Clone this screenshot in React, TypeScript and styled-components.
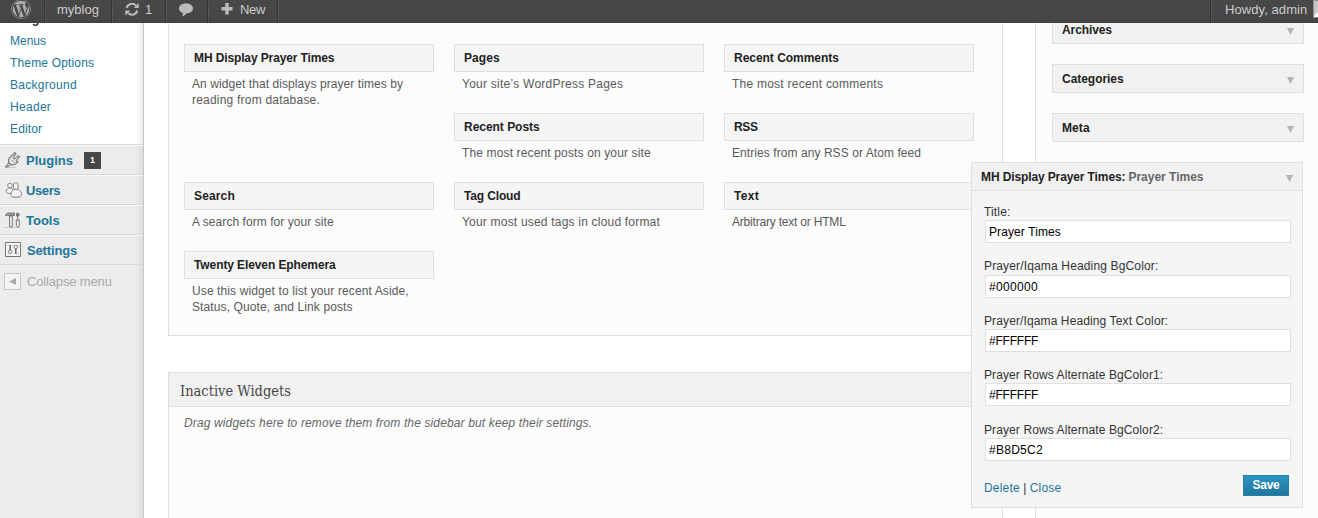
import React from "react";
import styled, { createGlobalStyle } from "styled-components";
import { FaWordpress } from "react-icons/fa";

const Global = createGlobalStyle`
  * { box-sizing: border-box; }
  body { margin: 0; background: #fff; overflow: hidden; font: 12px/16px "Liberation Sans", Arial, sans-serif; color: #333; }
  a { color: #21759b; text-decoration: none; }
  p, h2, h3, h4 { margin: 0; }
`;

/* Slightly tracked run of text */
const Run = styled.span<{ $track?: number }>`
  letter-spacing: ${(p) => p.$track ?? 0}px;
  white-space: nowrap;
`;

const Page = styled.div`
  width: 1318px;
  height: 518px;
  display: flex;
  flex-direction: column;
  overflow: hidden;
  position: relative;
`;

const AdminBar = styled.header`
  flex: none;
  height: 23px;
  display: flex;
  background: linear-gradient(#484848, #464646 80%, #424242);
  color: #ccc;
  font-size: 13px;
  line-height: 19px;
`;
const BarItem = styled.div<{ $width: number; $pad: number; $gap?: number }>`
  width: ${(p) => p.$width}px;
  padding-left: ${(p) => p.$pad}px;
  display: flex;
  gap: ${(p) => p.$gap ?? 0}px;
  border-right: 1px solid #333;
  box-shadow: 1px 0 0 #555;
  svg { flex: none; }
`;
const Logo = styled(FaWordpress)`
  width: 20px;
  height: 20px;
  margin-top: -1px;
  color: #aaa;
`;
const BarAccount = styled.div`
  margin-left: auto;
  width: 107px;
  padding-left: 13px;
  display: flex;
  border-left: 1px solid #555;
  box-shadow: -1px 0 0 #333;
  overflow: hidden;
`;
const AccountName = styled.span`
  width: 88px;
  flex: none;
`;
const Avatar = styled.span`
  flex: none;
  width: 18px;
  height: 18px;
  border: 1px solid #8f8f8f;
  background: #c6c6c6;
  overflow: hidden;
  svg { display: block; }
`;

const Body = styled.div`
  flex: 1;
  min-height: 0;
  display: flex;
`;

const Sidebar = styled.nav`
  flex: none;
  width: 144px;
  overflow: hidden;
  border-right: 1px solid #c6c6c6;
  background: linear-gradient(to left, rgba(0, 0, 0, 0.07), rgba(0, 0, 0, 0) 7px), #ececec;
`;
const Submenu = styled.div`
  height: 121px;
  background: linear-gradient(to left, rgba(0, 0, 0, 0.07), rgba(0, 0, 0, 0) 7px), #fff;
  overflow: hidden;
`;
const SubmenuList = styled.div`
  margin-top: -15px;
  padding-left: 10px;
  display: flex;
  flex-direction: column;
  line-height: 22px;
`;
const Current = styled.b`
  color: #333;
`;
const MenuRow = styled.a`
  height: 30px;
  padding: 2px 0 0 4px;
  display: flex;
  align-items: center;
  border-top: 1px solid #d9d9d9;
  box-shadow: inset 0 1px 0 #f9f9f9;
  font-weight: bold;
  font-size: 13px;
`;
const MenuIcon = styled.span<{ $wide?: boolean }>`
  width: ${(p) => (p.$wide ? 23 : 22)}px;
  height: 18px;
  margin-bottom: 2px;
  svg { display: block; }
`;
const Count = styled.span`
  width: 17px;
  height: 17px;
  margin-left: 11px;
  background: #464646;
  color: #fff;
  font-size: 9px;
  line-height: 17px;
  text-align: center;
`;
const Collapse = styled.div`
  height: 40px;
  padding: 8px 0 0 4px;
  display: flex;
  gap: 6px;
  border-top: 1px solid #d9d9d9;
  color: #aaa;
  font-size: 13px;
  line-height: 17px;
`;
const CollapseButton = styled.span`
  width: 17px;
  height: 17px;
  border: 1px solid #c8c8c8;
  background: #f4f4f4;
  svg { display: block; }
`;

const Main = styled.main`
  flex: none;
  width: 835px;
  margin-left: 24px;
  display: flex;
  flex-direction: column;
`;
const Available = styled.section`
  flex: none;
  height: 313px;
  padding: 21px 15px 0;
  display: grid;
  grid-template-columns: repeat(3, 250px);
  grid-auto-rows: 69px;
  column-gap: 20px;
  align-content: start;
  border: 1px solid #dfdfdf;
  border-top: 0;
  background: #fcfcfc;
`;
const Cell = styled.div<{ $start?: boolean }>`
  ${(p) => p.$start && "grid-column-start: 2;"}
`;
const WidgetTitle = styled.h4`
  height: 28px;
  padding-left: 9px;
  border: 1px solid #dfdfdf;
  background: #f5f5f5;
  color: #222;
  font-size: 12px;
  line-height: 26px;
`;
const Description = styled.p`
  padding: 4px 0 0 8px;
  color: #5a5a5a;
`;
const Inactive = styled.section`
  flex: 1;
  margin-top: 36px;
  border: 1px solid #dfdfdf;
  border-bottom: 0;
  background: #fcfcfc;
`;
const InactiveTitle = styled.h3`
  height: 34px;
  padding-left: 11px;
  border-bottom: 1px solid #dfdfdf;
  background: #f1f1f1;
  color: #464646;
  font: 14.5px/36px "DejaVu Serif Condensed", Georgia, serif;
`;
const Hint = styled.p`
  padding: 8px 0 0 15px;
  color: #666;
  font-style: italic;
`;

const Column = styled.aside`
  flex: 1;
  margin-left: 32px;
  padding-left: 16px;
  border-left: 1px solid #dfdfdf;
  background: #fcfcfc;
  overflow: hidden;
`;
const Stack = styled.div`
  margin-top: -8px;
  display: flex;
  flex-direction: column;
  gap: 20px;
`;
const SidebarWidget = styled.div`
  width: 252px;
  height: 29px;
  padding: 0 9px;
  display: flex;
  justify-content: space-between;
  align-items: center;
  border: 1px solid #dfdfdf;
  background: #f1f1f1;
  color: #222;
  font-weight: bold;
  svg { margin-top: 3px; }
`;

const Editor = styled.section`
  position: absolute;
  left: 971px;
  top: 162px;
  width: 332px;
  height: 346px;
  border: 1px solid #dfdfdf;
  background: #f5f5f5;
`;
const EditorHeader = styled.header`
  height: 28px;
  padding: 0 9px;
  display: flex;
  align-items: center;
  border-bottom: 1px solid #dfdfdf;
  background: #f1f1f1;
  color: #222;
  font-weight: bold;
  svg { margin: 3px 0 0 auto; }
`;
const EditorSubtitle = styled.span`
  margin-left: 3px;
  color: #666;
`;
const Form = styled.form`
  padding: 13px 11px 0 12px;
`;
const Field = styled.label`
  display: block;
  height: 54.4px;
  line-height: 16.2px;
`;
const Input = styled.input<{ $track: number }>`
  display: block;
  width: 306px;
  height: 23px;
  margin-left: 1px;
  padding: 1px 3px 0;
  border: 1px solid #dfdfdf;
  border-radius: 0;
  background: #fff;
  color: #000;
  outline: 0;
  font: 12px "Liberation Sans", Arial, sans-serif;
  letter-spacing: ${(p) => p.$track}px;
`;
const Actions = styled.div`
  display: flex;
  justify-content: space-between;
  padding-right: 2px;
`;
const Links = styled.div`
  padding-top: 4px;
`;
const Save = styled.button`
  width: 46px;
  height: 21px;
  margin-top: -1px;
  padding: 0;
  border: 1px solid #2480aa;
  border-radius: 0;
  background: linear-gradient(#2a95c5, #21759b);
  color: #fff;
  font: bold 12px/18px "Liberation Sans", Arial, sans-serif;
`;

const Caret = () => (
  <svg width="7" height="7" viewBox="0 0 7 7"><path d="M0 0h7L3.5 7z" fill="#b4b4b4" /></svg>
);

const SyncIcon = () => (
  <svg width="16" height="18" viewBox="0 0 16 18" fill="none" stroke="#bbb" strokeWidth="2">
    <path d="M2.700 8a5.300 5 0 0 1 9.300-2.400M13.300 10.500A5.300 5 0 0 1 4 12.900" />
    <path d="M14.700 3v5H9.700z M1.300 15.500v-5h5z" fill="#bbb" stroke="none" />
  </svg>
);
const BubbleIcon = () => (
  <svg width="16" height="20" viewBox="0 0 16 20">
    <path d="M8 3.500c4 0 7 2 7 4.900s-3 4.900-6.600 4.900c-.8 1.500-2.400 2.800-4.400 3.300.8-1.200 1-2.500.8-3.800C2.400 12 1 10.400 1 8.400c0-2.900 3-4.900 7-4.900z" fill="#bbb" />
  </svg>
);
const PlusIcon = () => (
  <svg width="12" height="16" viewBox="0 0 12 16"><path d="M4.300 3h3.400v4h3.800v3.400H7.700v4H4.300v-4H.5V7h3.800z" fill="#bbb" /></svg>
);

const PluginIcon = () => (
  <svg width="18" height="18" viewBox="0 0 18 18" fill="none" stroke="#777" strokeWidth="1.100">
    <path d="M1 16.500h11" stroke="#ccc" />
    <path d="M5 7.500 7.500 5l6.500 6-3 2.300c-2 .9-4 .6-5.300-.7S4.200 9.300 5 7.500z" fill="#eee" />
    <path d="m7 5.500 4-4 1 1.200-3 4M12 9.800l3.500-4.300-1.200-.8-4 3.600" fill="#fff" />
    <path d="M5.500 12c-2.500 0-1.500 2.500-4.500 4.200M7.500 13.300c-2 .2-2 2.200-5 3" />
    <path d="m7 8.500 4 3.500" stroke="#aaa" />
  </svg>
);
const UsersIcon = () => (
  <svg width="19" height="18" viewBox="0 0 19 18" fill="#f4f4f4" stroke="#888">
    <path d="M5 16.500h13" stroke="#ccc" />
    <circle cx="6" cy="4.500" r="2.300" />
    <path d="M6 7c-2.300 0-3.700 1.500-3.700 3.300S4 12.500 7 12.500L9 9C8.500 7.700 7.500 7 6 7z" />
    <rect x="9.500" y="1.600" width="4.600" height="7" rx="2.300" />
    <path d="M12 8.300c-3.200 0-5 2-5 4.300 0 2.500 2 3.600 5.200 3.600 3.300 0 5.300-1.100 5.300-3.600 0-2.300-2.300-4.300-5.500-4.300z" />
  </svg>
);
const ToolsIcon = () => (
  <svg width="18" height="18" viewBox="0 0 18 18" fill="none" stroke="#777">
    <path d="M1 16.500h15" stroke="#ccc" />
    <path d="M1.500 5c.3-2 1.500-3 3.500-3h5.500v2.500H5C3.500 4 2.500 4 1.500 5z" fill="#999" />
    <path d="M5.500 5h2.800v10.800H5.500z" fill="#eee" />
    <path d="M13.700 1.500v8M12.300 9h3v5.500c0 1.800-3 1.800-3 0z" fill="#eee" />
    <path d="M12.500 2.500h2.500v2.500h-2.500z" fill="#888" />
  </svg>
);
const SettingsIcon = () => (
  <svg width="18" height="18" viewBox="0 0 18 18" fill="none" stroke="#777">
    <path d="M1.500 1.500h15v14h-15z" fill="#f6f6f6" />
    <path d="M6.200 4v5M11.800 8v5" strokeWidth="1.600" stroke="#666" />
    <circle cx="6.200" cy="10.800" r="1.700" fill="#fff" />
    <circle cx="11.800" cy="6" r="1.700" fill="#fff" />
    <path d="M3.500 4.500h1M8 4.500h1M14 4.500h1M3.500 12.500h1M14 12.500h1" stroke="#aaa" />
  </svg>
);

type Line = [text: string, track: number];

const submenu: Line[] = [["Menus", 0], ["Theme Options", 0.164], ["Background", 0.29], ["Header", 0.3], ["Editor", 0.13]];

const menu: { label: Line; icon: React.ReactNode; count?: number; wide?: boolean }[] = [
  { label: ["Plugins", 0], icon: <PluginIcon />, count: 1 },
  { label: ["Users", -0.4], icon: <UsersIcon /> },
  { label: ["Tools", 0], icon: <ToolsIcon /> },
  { label: ["Settings", -0.15], icon: <SettingsIcon />, wide: true },
];

const available: { title: Line; text: Line[]; start?: boolean }[] = [
  { title: ["MH Display Prayer Times", -0.12], text: [["An widget that displays prayer times by", 0.076], ["reading from database.", 0.21]] },
  { title: ["Pages", 0.05], text: [["Your site’s WordPress Pages", 0.25]] },
  { title: ["Recent Comments", -0.03], text: [["The most recent comments", 0.24]] },
  { title: ["Recent Posts", -0.03], text: [["The most recent posts on your site", 0.14]], start: true },
  { title: ["RSS", -0.3], text: [["Entries from any RSS or Atom feed", 0.07]] },
  { title: ["Search", 0.15], text: [["A search form for your site", 0.06]] },
  { title: ["Tag Cloud", -0.15], text: [["Your most used tags in cloud format", 0.2]] },
  { title: ["Text", 0.3], text: [["Arbitrary text or HTML", -0.2]] },
  { title: ["Twenty Eleven Ephemera", -0.1], text: [["Use this widget to list your recent Aside,", 0.11], ["Status, Quote, and Link posts", 0.11]] },
];

const placed: Line[] = [["Archives", -0.1], ["Categories", -0.04], ["Meta", 0.1]];

const fields: { label: Line; value: Line }[] = [
  { label: ["Title:", 0.15], value: ["Prayer Times", 0.1] },
  { label: ["Prayer/Iqama Heading BgColor:", 0.15], value: ["#000000", 0.32] },
  { label: ["Prayer/Iqama Heading Text Color:", 0.116], value: ["#FFFFFF", -0.22] },
  { label: ["Prayer Rows Alternate BgColor1:", 0.1], value: ["#FFFFFF", -0.22] },
  { label: ["Prayer Rows Alternate BgColor2:", 0.1], value: ["#B8D5C2", 0.27] },
];

export default function App() {
  return (
    <Page>
      <Global />
      <AdminBar>
        <BarItem $width={45} $pad={11}><Logo /></BarItem>
        <BarItem $width={67} $pad={12}><Run>myblog</Run></BarItem>
        <BarItem $width={54} $pad={12} $gap={5}><SyncIcon /><Run>1</Run></BarItem>
        <BarItem $width={42} $pad={12}><BubbleIcon /></BarItem>
        <BarItem $width={70} $pad={13} $gap={7}><PlusIcon /><Run $track={-0.3}>New</Run></BarItem>
        <BarAccount>
          <AccountName><Run $track={0.08}>Howdy, admin</Run></AccountName>
          <Avatar>
            <svg width="16" height="16" viewBox="0 0 16 16"><path d="M0 16c1-3 3-5 6-5h4c3 0 5 2 6 5z" fill="#fff" /></svg>
          </Avatar>
        </BarAccount>
      </AdminBar>

      <Body>
        <Sidebar>
          <Submenu>
            <SubmenuList>
              <Current>Widgets</Current>
              {submenu.map(([t, k]) => (
                <a key={t}><Run $track={k}>{t}</Run></a>
              ))}
            </SubmenuList>
          </Submenu>
          {menu.map((m) => (
            <MenuRow key={m.label[0]}>
              <MenuIcon $wide={m.wide}>{m.icon}</MenuIcon>
              <Run $track={m.label[1]}>{m.label[0]}</Run>
              {m.count && <Count>{m.count}</Count>}
            </MenuRow>
          ))}
          <Collapse>
            <CollapseButton>
              <svg width="15" height="15" viewBox="0 0 15 15"><path d="M4 7.500 11 4v7z" fill="#aaa" /></svg>
            </CollapseButton>
            <Run $track={-0.15}>Collapse menu</Run>
          </Collapse>
        </Sidebar>

        <Main>
          <Available>
            {available.map((w) => (
              <Cell key={w.title[0]} $start={w.start}>
                <WidgetTitle><Run $track={w.title[1]}>{w.title[0]}</Run></WidgetTitle>
                <Description>
                  {w.text.map(([t, k], i) => (
                    <React.Fragment key={t}>
                      {i > 0 && <br />}
                      <Run $track={k}>{t}</Run>
                    </React.Fragment>
                  ))}
                </Description>
              </Cell>
            ))}
          </Available>
          <Inactive>
            <InactiveTitle>Inactive Widgets</InactiveTitle>
            <Hint><Run $track={0.135}>Drag widgets here to remove them from the sidebar but keep their settings.</Run></Hint>
          </Inactive>
        </Main>

        <Column>
          <Stack>
            {placed.map(([t, k]) => (
              <SidebarWidget key={t}><Run $track={k}>{t}</Run><Caret /></SidebarWidget>
            ))}
          </Stack>
        </Column>
      </Body>

      <Editor>
        <EditorHeader>
          <Run $track={-0.117}>MH Display Prayer Times:</Run>
          <EditorSubtitle><Run>Prayer Times</Run></EditorSubtitle>
          <Caret />
        </EditorHeader>
        <Form>
          {fields.map((f) => (
            <Field key={f.label[0]}>
              <Run $track={f.label[1]}>{f.label[0]}</Run>
              <Input $track={f.value[1]} value={f.value[0]} readOnly />
            </Field>
          ))}
          <Actions>
            <Links>
              <a><Run $track={0.2}>Delete</Run></a> | <a><Run $track={0.22}>Close</Run></a>
            </Links>
            <Save type="button"><Run $track={-0.3}>Save</Run></Save>
          </Actions>
        </Form>
      </Editor>
    </Page>
  );
}
